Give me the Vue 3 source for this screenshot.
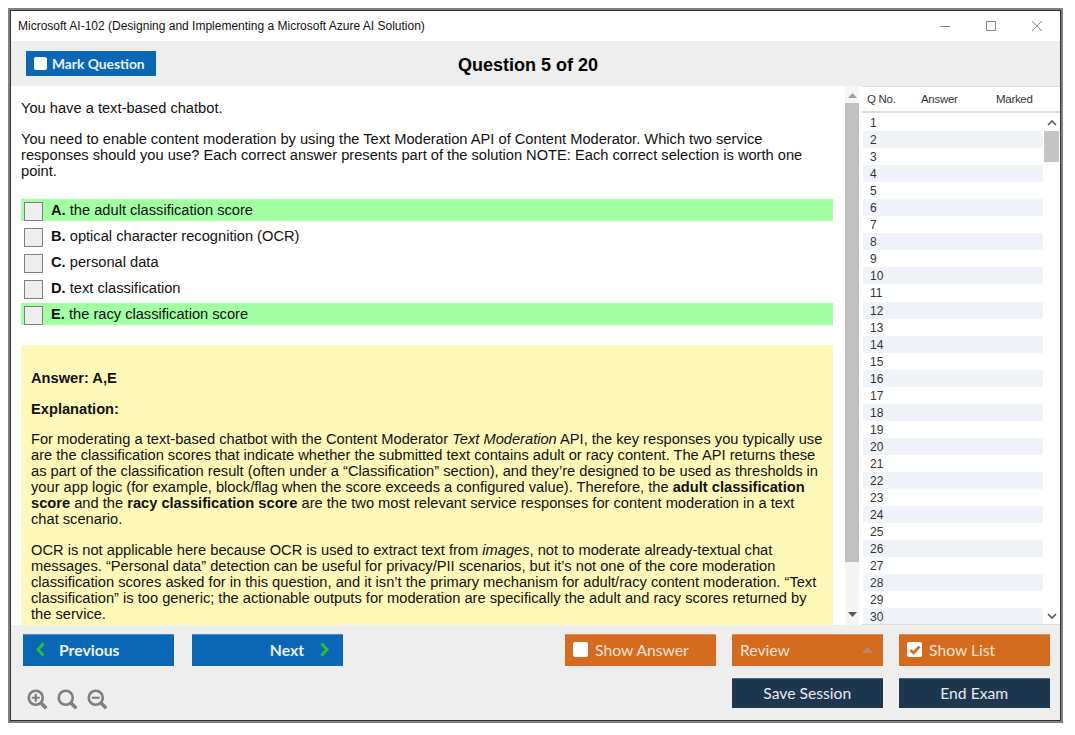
<script setup>
const options = [
  { key: 'A.', text: 'the adult classification score', correct: true },
  { key: 'B.', text: 'optical character recognition (OCR)', correct: false },
  { key: 'C.', text: 'personal data', correct: false },
  { key: 'D.', text: 'text classification', correct: false },
  { key: 'E.', text: 'the racy classification score', correct: true }
]
const rows = Array.from({ length: 30 }, (_, i) => i + 1)
</script>

<template>
  <div class="window">
    <header class="titlebar">
      <span class="title">Microsoft AI-102 (Designing and Implementing a Microsoft Azure AI Solution)</span>
      <div class="controls">
        <svg width="12" height="12" viewBox="0 0 12 12"><path d="M1 6.500h10" stroke="#888" fill="none" /></svg>
        <svg width="12" height="12" viewBox="0 0 12 12"><rect x="1.500" y="1.500" width="9" height="9" stroke="#888" fill="none" /></svg>
        <svg width="12" height="12" viewBox="0 0 12 12"><path d="M1 1l10 10M11 1L1 11" stroke="#888" fill="none" /></svg>
      </div>
    </header>

    <div class="topbar">
      <button class="mark"><span class="box"></span>Mark Question</button>
      <h1>Question 5 of 20</h1>
    </div>

    <div class="main">
      <section class="left">
        <div class="content">
          <p class="q first">You have a text-based chatbot.</p>
          <p class="q">You need to enable content moderation by using the Text Moderation API of Content Moderator. Which two service responses should you use? Each correct answer presents part of the solution NOTE: Each correct selection is worth one point.</p>
          <ul class="options">
            <li v-for="o in options" :key="o.key" :class="{ correct: o.correct }">
              <span class="check"></span>
              <span><b>{{ o.key }}</b> {{ o.text }}</span>
            </li>
          </ul>
          <div class="answer">
            <p><b>Answer: A,E</b></p>
            <p class="tight"><b>Explanation:</b></p>
            <p>For moderating a text-based chatbot with the Content Moderator <i>Text Moderation</i> API, the key responses you typically use are the classification scores that indicate whether the submitted text contains adult or racy content. The API returns these as part of the classification result (often under a “Classification” section), and they’re designed to be used as thresholds in your app logic (for example, block/flag when the score exceeds a configured value). Therefore, the <b>adult classification score</b> and the <b>racy classification score</b> are the two most relevant service responses for content moderation in a text chat scenario.</p>
            <p>OCR is not applicable here because OCR is used to extract text from <i>images</i>, not to moderate already-textual chat messages. “Personal data” detection can be useful for privacy/PII scenarios, but it’s not one of the core moderation classification scores asked for in this question, and it isn’t the primary mechanism for adult/racy content moderation. “Text classification” is too generic; the actionable outputs for moderation are specifically the adult and racy scores returned by the service.</p>
          </div>
        </div>
        <div class="vscroll">
          <svg width="9" height="5" viewBox="0 0 9 5"><path d="M4.500 0L9 5H0z" fill="#a0a0a0" /></svg>
          <div class="thumb"></div>
          <svg width="9" height="5" viewBox="0 0 9 5"><path d="M0 0h9L4.500 5z" fill="#555" /></svg>
        </div>
      </section>

      <aside class="list">
        <div class="head"><span>Q No.</span><span>Answer</span><span>Marked</span></div>
        <div class="list-body">
          <div class="rows">
            <div v-for="n in rows" :key="n" class="row" :class="{ odd: n % 2 === 0 }">{{ n }}</div>
          </div>
          <div class="list-scroll">
            <svg width="10" height="6" viewBox="0 0 10 6"><path d="M1 5l4-4 4 4" stroke="#555" stroke-width="1.600" fill="none" /></svg>
            <div class="list-thumb"></div>
            <div class="spacer"></div>
            <svg width="10" height="6" viewBox="0 0 10 6"><path d="M1 1l4 4 4-4" stroke="#555" stroke-width="1.600" fill="none" /></svg>
          </div>
        </div>
      </aside>
    </div>

    <footer class="bottom">
      <div class="bottom-left">
        <div class="nav">
          <button class="btn blue prev">
            <svg width="11" height="15" viewBox="0 0 11 15"><path d="M8.500 1.500L3 7.500l5.500 6" stroke="#2cbf2c" stroke-width="3" fill="none" /></svg>
            Previous
          </button>
          <button class="btn blue next">
            Next
            <svg width="11" height="15" viewBox="0 0 11 15"><path d="M2.500 1.500l5.500 6-5.500 6" stroke="#2cbf2c" stroke-width="3" fill="none" /></svg>
          </button>
        </div>
        <div class="zoom">
          <svg width="21" height="21" viewBox="0 0 24 24" fill="none" stroke="#7f7f7f"><circle cx="10" cy="10" r="8" stroke-width="3" /><path d="M16 16l6 6" stroke-width="4" /><path d="M5.500 10h9M10 5.500v9" stroke-width="2.500" /></svg>
          <svg width="21" height="21" viewBox="0 0 24 24" fill="none" stroke="#7f7f7f"><circle cx="10" cy="10" r="8" stroke-width="3" /><path d="M16 16l6 6" stroke-width="4" /></svg>
          <svg width="21" height="21" viewBox="0 0 24 24" fill="none" stroke="#7f7f7f"><circle cx="10" cy="10" r="8" stroke-width="3" /><path d="M16 16l6 6" stroke-width="4" /><path d="M5.500 10h9" stroke-width="2.500" /></svg>
        </div>
      </div>
      <div class="actions">
        <button class="btn orange"><span class="cb"></span>Show Answer</button>
        <button class="btn orange review">Review<svg width="11" height="6" viewBox="0 0 11 6"><path d="M5.500 0L11 6H0z" fill="#b8896a" /></svg></button>
        <button class="btn orange">
          <span class="cb"><svg width="14" height="14" viewBox="0 0 14 14"><path d="M2.500 7l3 3 6-6.500" stroke="#d46b1f" stroke-width="2.600" fill="none" /></svg></span>Show List
        </button>
        <span></span>
        <button class="btn navy">Save Session</button>
        <button class="btn navy">End Exam</button>
      </div>
    </footer>
  </div>
</template>

<style scoped>
* { box-sizing: border-box; }
.window {
  position: relative;
  width: 1055px;
  height: 715px;
  margin: 8px;
  border: 2px solid #808080;
  outline: 1px solid #333;
  outline-offset: -3px;
  padding: 1px;
  display: flex;
  flex-direction: column;
  background: #fff;
  font-family: "Liberation Sans", Arial, sans-serif;
  color: #111;
}
.titlebar {
  height: 30px;
  flex: none;
  display: flex;
  align-items: center;
  justify-content: space-between;
  padding-left: 7px;
  background: #fff;
}
.title { font-size: 12px; }
.controls { display: flex; gap: 34px; padding-right: 17px; margin-top: -1px; }
.topbar {
  height: 45px;
  flex: none;
  background: #eee;
  display: grid;
  grid-template-columns: 130px 1fr 130px;
  align-items: center;
  padding: 0 31px 0 15px;
}
.mark {
  height: 25px;
  margin-top: -1px;
  border: 0;
  padding: 0 0 0 8px;
  display: flex;
  align-items: center;
  gap: 5px;
  background: #0a67b5;
  color: #e9f2fa;
  font: 700 13.800px Lato, sans-serif;
}
.box { width: 13px; height: 13px; background: #fff; border-radius: 2px; }
h1 {
  margin: 3px 0 0 1px;
  text-align: center;
  font-size: 18px;
  line-height: 20px;
  font-weight: 700;
  color: #000;
}
.main { flex: 1; min-height: 0; display: flex; }
.left { width: 850px; display: flex; overflow: hidden; background: #fff; }
.content { width: 834px; flex: none; padding: 0 0 0 10px; font-size: 14.670px; line-height: 16px; overflow: hidden; }
.q { margin: 15px 0 0; width: 790px; }
.q.first { margin-top: 14px; }
.options { list-style: none; margin: 20px 0 0; padding: 0; width: 812px; }
.options li {
  height: 22px;
  margin-bottom: 4px;
  display: flex;
  align-items: center;
  gap: 8px;
  padding-left: 3px;
}
.options li.correct { background: #a3ffa3; }
.check {
  width: 19px;
  height: 19px;
  margin-top: 3px;
  flex: none;
  background: #eee;
  border: 1px solid #808080;
}
.answer {
  margin-top: 20px;
  width: 812px;
  background: #fff8b8;
  padding: 25px 10px 0;
  height: 280px;
  overflow: hidden;
}
.answer p { margin: 0 0 15px; }
.answer p.tight { margin-bottom: 14px; }
.vscroll {
  width: 14px;
  display: flex;
  flex-direction: column;
  align-items: center;
  padding-top: 7px;
  background: #f5f5f5;
}
.thumb { width: 14px; height: 459px; background: #c0c0c0; margin: 5px 0 50px; }
.list { flex: 1; display: flex; flex-direction: column; margin-left: 1px; background: #fff; }
.head {
  height: 27px;
  flex: none;
  border-top: 1px solid #ddd;
  border-bottom: 2px solid #ddd;
  display: flex;
  align-items: center;
  font-size: 11.500px;
  letter-spacing: -0.3px;
  color: #333;
}
.head span:nth-child(1) { margin-left: 5px; width: 54px; }
.head span:nth-child(2) { width: 75px; }
.list-body { flex: 1; display: flex; min-height: 0; border-bottom: 1px solid #ddd; overflow: hidden; }
.rows { width: 180px; margin-left: 1px; padding-top: 1px; flex: none; overflow: hidden; }
.row { height: 17.050px; line-height: 19px; font-size: 12px; padding-left: 7px; color: #333; }
.row.odd { background: #f0f4f8; }
.list-scroll { width: 15px; margin-left: 1px; display: flex; flex-direction: column; align-items: center; padding: 7px 0 5px; }
.list-thumb { width: 15px; height: 31px; background: #c4c4c4; margin-top: 5px; }
.spacer { flex: 1; }
.bottom { height: 95px; flex: none; background: #eee; display: flex; justify-content: space-between; padding: 9px 10.500px 0 12px; }
.nav { display: flex; gap: 18.500px; }
.btn {
  height: 32px;
  width: 150px;
  border: 0;
  border-top: 1px solid rgba(255,255,255,.25);
  display: flex;
  align-items: center;
  font: 15.700px Lato, sans-serif;
  padding: 0 0 2px;
  color: #f3e3d6;
}
.blue { background: #0a67b5; color: #e9f2fa; font-weight: 700; }
.nav .btn { width: 150.500px; }
.prev { padding-left: 12px; gap: 13px; }
.next { justify-content: flex-end; padding-right: 12.500px; gap: 15px; }
.zoom { display: flex; gap: 9px; margin-top: 23px; margin-left: 4px; }
.actions { display: grid; grid-template-columns: repeat(3, 150.500px); grid-auto-rows: min-content; gap: 12px 16.500px; }
.actions .btn { width: 100%; }
.orange { background: #d46b1f; padding-left: 8px; gap: 7px; }
.review { justify-content: space-between; padding-right: 10px; }
.cb { width: 15px; height: 15px; background: #fff; border-radius: 2px; display: flex; align-items: center; justify-content: center; }
.navy { background: #1d374f; justify-content: center; color: #e6ebf0; height: 30px; }
</style>
